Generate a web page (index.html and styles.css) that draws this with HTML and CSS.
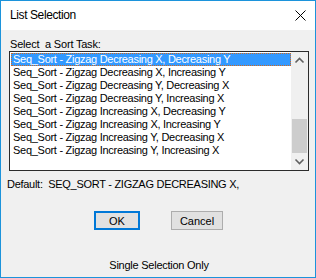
FILE: index.html
```html
<!DOCTYPE html>
<html lang="en">

<head>
    <meta charset="UTF-8" />
    <title>List Selection</title>
    <link rel="stylesheet" href="styles.css">
</head>

<body>
    <div class="dialog">
        <div class="titlebar">
            <span class="title">List Selection</span>
            <svg class="close" width="11" height="11" viewBox="0 0 11 11">
                <path d="M0.5 0.5 L10.5 10.5 M10.5 0.5 L0.5 10.5" stroke="#000" stroke-width="1" />
            </svg>
        </div>
        <div class="content">
            <div class="prompt">Select&nbsp; a Sort Task:</div>
            <div class="listbox">
                <ul class="items">
                    <li class="selected">Seq_Sort - Zigzag Decreasing X, Decreasing Y</li>
                    <li>Seq_Sort - Zigzag Decreasing X, Increasing Y</li>
                    <li>Seq_Sort - Zigzag Decreasing Y, Decreasing X</li>
                    <li>Seq_Sort - Zigzag Decreasing Y, Increasing X</li>
                    <li>Seq_Sort - Zigzag Increasing X, Decreasing Y</li>
                    <li>Seq_Sort - Zigzag Increasing X, Increasing Y</li>
                    <li>Seq_Sort - Zigzag Increasing Y, Decreasing X</li>
                    <li>Seq_Sort - Zigzag Increasing Y, Increasing X</li>
                </ul>
                <div class="scrollbar">
                    <svg class="arrow" width="17" height="17" viewBox="0 0 17 17">
                        <path d="M4.5 10.5 L8.5 6.5 L12.5 10.5" fill="none" stroke="#606060" stroke-width="1.6" />
                    </svg>
                    <div class="track">
                        <div class="thumb"></div>
                    </div>
                    <svg class="arrow" width="17" height="17" viewBox="0 0 17 17">
                        <path d="M4.5 6.5 L8.5 10.5 L12.5 6.5" fill="none" stroke="#606060" stroke-width="1.6" />
                    </svg>
                </div>
            </div>
            <div class="default">Default:&nbsp; SEQ_SORT - ZIGZAG DECREASING X,</div>
            <div class="buttons">
                <button class="btn btn-ok">OK</button>
                <button class="btn">Cancel</button>
            </div>
            <div class="status">Single Selection Only</div>
        </div>
    </div>
</body>

</html>
```

FILE: styles.css
```css
body {
    margin: 0;
    padding: 0;
    font-family: 'Liberation Sans', Arial, sans-serif;
    font-size: 11px;
    color: #000;
}

.dialog {
    width: 314px;
    height: 276px;
    border: 1px solid #1c93db;
    background-color: #f0f0f0;
    display: flex;
    flex-direction: column;
}

.titlebar {
    height: 29px;
    background-color: #fff;
    display: flex;
    align-items: center;
    justify-content: space-between;
    padding: 0 9px 0 9px;
}

.title {
    font-size: 12px;
    letter-spacing: -0.4px;
    padding-bottom: 1px;
}

.content {
    flex: 1;
    display: flex;
    flex-direction: column;
    padding: 0 6px 0 8px;
}

.prompt {
    margin-top: 7px;
    margin-left: 1px;
    height: 14px;
    line-height: 14px;
    letter-spacing: -0.2px;
}

.listbox {
    width: 298px;
    height: 118px;
    border: 1px solid #2b2b2b;
    background-color: #fff;
    display: flex;
}

.items {
    list-style: none;
    margin: 0;
    padding: 1px 0 0 1px;
    flex: 1;
}

.items li {
    height: 13px;
    line-height: 13px;
    padding-left: 2px;
    white-space: nowrap;
    letter-spacing: -0.28px;
}

.items li.selected {
    background-color: #3399ff;
    color: #fff;
    outline: 1px dotted #d2691e;
    outline-offset: -1px;
}

.scrollbar {
    width: 17px;
    background-color: #f0f0f0;
    display: flex;
    flex-direction: column;
}

.track {
    flex: 1;
    display: flex;
    flex-direction: column;
    justify-content: flex-end;
}

.thumb {
    height: 34px;
    margin: 0 1px;
    background-color: #cdcdcd;
}

.default {
    margin-top: 6px;
    margin-left: -2px;
    height: 14px;
    line-height: 14px;
    letter-spacing: -0.28px;
}

.buttons {
    display: flex;
    gap: 31px;
    margin-top: 20px;
    padding-left: 85px;
}

.btn {
    height: 19px;
    width: 52px;
    padding: 0;
    border: 1px solid #adadad;
    background-color: #e1e1e1;
    font-family: 'Liberation Sans', Arial, sans-serif;
    font-size: 11px;
    color: #000;
}

.btn-ok {
    width: 46px;
    border: 2px solid #0078d7;
}

.status {
    margin-top: 28px;
    text-align: center;
    height: 14px;
    line-height: 14px;
    letter-spacing: -0.25px;
}
```
